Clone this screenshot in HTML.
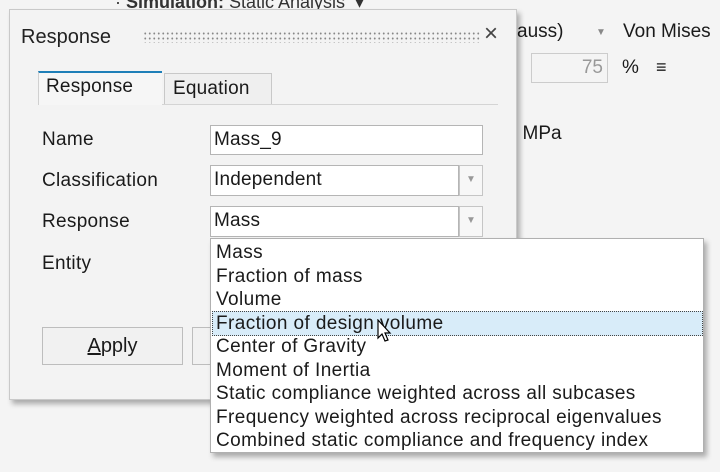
<!DOCTYPE html>
<html><head><style>
*{margin:0;padding:0;box-sizing:border-box}
body{width:720px;height:472px;background:#f4f4f4;font-family:"Liberation Sans",sans-serif;color:#1a1a1a;position:relative;overflow:hidden}
.a{position:absolute;white-space:nowrap}
.dlg{position:absolute;left:9px;top:9px;width:508px;height:391px;background:#f3f3f3;border:1px solid #c9c9c9;box-shadow:3px 4px 5px rgba(0,0,0,.3)}
.inp{position:absolute;background:#fff;border:1px solid #b5b5b5;font-size:19px;letter-spacing:0.2px;padding-left:3px;line-height:28px}
.arr{position:absolute;border:1px solid #c5c5c5;background:#f7f7f7;color:#999;font-size:10px;text-align:center;line-height:28px}
.lab{position:absolute;left:42px;font-size:19px;letter-spacing:0.3px}
.dd{position:absolute;left:210px;top:238px;width:494px;height:215px;background:#fff;border:1px solid #b0b0b0;box-shadow:3px 4px 5px rgba(0,0,0,.3)}
.it{position:absolute;left:5px;font-size:19px;letter-spacing:0.4px;line-height:23.5px;white-space:nowrap}
</style></head><body>
<div class="a" style="left:115px;top:-8px;font-size:18px;color:#333">· <b>Simulation:</b> Static Analysis &nbsp;▾</div>
<div class="a" style="left:517px;top:21px;font-size:19px">auss)</div>
<div class="a" style="left:596px;top:27px;font-size:10px;color:#888">▼</div>
<div class="a" style="left:623px;top:21px;font-size:19px">Von Mises</div>
<div class="a" style="left:531px;top:53px;width:77px;height:30px;border:1px solid #ccc;background:#f4f4f4;color:#999;font-size:19px;text-align:right;padding-right:4px;line-height:28px">75</div>
<div class="a" style="left:622px;top:57px;font-size:19px">%</div>
<div class="a" style="left:656px;top:57px;font-size:18px">≡</div>
<div class="a" style="left:513px;top:123px;font-size:19px">l MPa</div>

<div class="dlg">
<div class="a" style="left:11px;top:16px;font-size:20px;color:#222">Response</div>
<div class="a" style="left:133px;top:21px;width:337px;height:12px;background-image:radial-gradient(circle,#888 0.8px,transparent 1.1px);background-size:4.5px 5px"></div>
<div class="a" style="left:474px;top:10px;font-size:24px;font-weight:300;color:#444">×</div>
<div class="a" style="left:28px;top:94px;width:460px;border-top:1px solid #d4d4d4"></div>
<div class="a" style="left:28px;top:61px;width:124px;height:34px;background:#f6f6f6;border-left:1px solid #d0d0d0;border-top:2px solid #1e7fb8"></div>
<div class="a" style="left:36px;top:66px;font-size:19px;letter-spacing:0.2px">Response</div>
<div class="a" style="left:154px;top:63px;width:108px;height:31px;border:1px solid #c8c8c8;border-bottom:none;background:#efefef"></div>
<div class="a" style="left:163px;top:68px;font-size:19px;letter-spacing:0.2px">Equation</div>
</div>

<div class="lab" style="top:129px">Name</div>
<div class="lab" style="top:170px">Classification</div>
<div class="lab" style="top:211px">Response</div>
<div class="lab" style="top:253px">Entity</div>
<div class="inp" style="left:210px;top:125px;width:273px;height:30px">Mass_9</div>
<div class="inp" style="left:210px;top:165px;width:249px;height:31px">Independent</div>
<div class="arr" style="left:459px;top:165px;width:24px;height:31px">▼</div>
<div class="inp" style="left:210px;top:206px;width:249px;height:31px">Mass</div>
<div class="arr" style="left:459px;top:206px;width:24px;height:31px">▼</div>
<div class="a" style="left:42px;top:327px;width:141px;height:38px;border:1px solid #bdbdbd;background:#f1f1f1;font-size:20px;text-align:center;line-height:36px"><u>A</u>pply</div>
<div class="a" style="left:192px;top:327px;width:30px;height:38px;border:1px solid #bdbdbd;border-right:none;background:#f1f1f1"></div>

<div class="dd">
<div class="a" style="left:1px;top:72px;width:491px;height:25px;background:#d8ecf9;border:1px dotted #444"></div>
<div class="it" style="top:2px">Mass</div>
<div class="it" style="top:25.5px">Fraction of mass</div>
<div class="it" style="top:49px">Volume</div>
<div class="it" style="top:72.5px">Fraction of design volume</div>
<div class="it" style="top:96px">Center of Gravity</div>
<div class="it" style="top:119.5px">Moment of Inertia</div>
<div class="it" style="top:143px">Static compliance weighted across all subcases</div>
<div class="it" style="top:166.5px">Frequency weighted across reciprocal eigenvalues</div>
<div class="it" style="top:190px">Combined static compliance and frequency index</div>
</div>
<svg class="a" style="left:377px;top:319px" width="16" height="26" viewBox="0 0 16 26"><path d="M1 1 L1 19 L5 15 L8 22 L11 21 L8 14 L13 14 Z" fill="#fff" stroke="#000" stroke-width="1.2"/></svg>
</body></html>
